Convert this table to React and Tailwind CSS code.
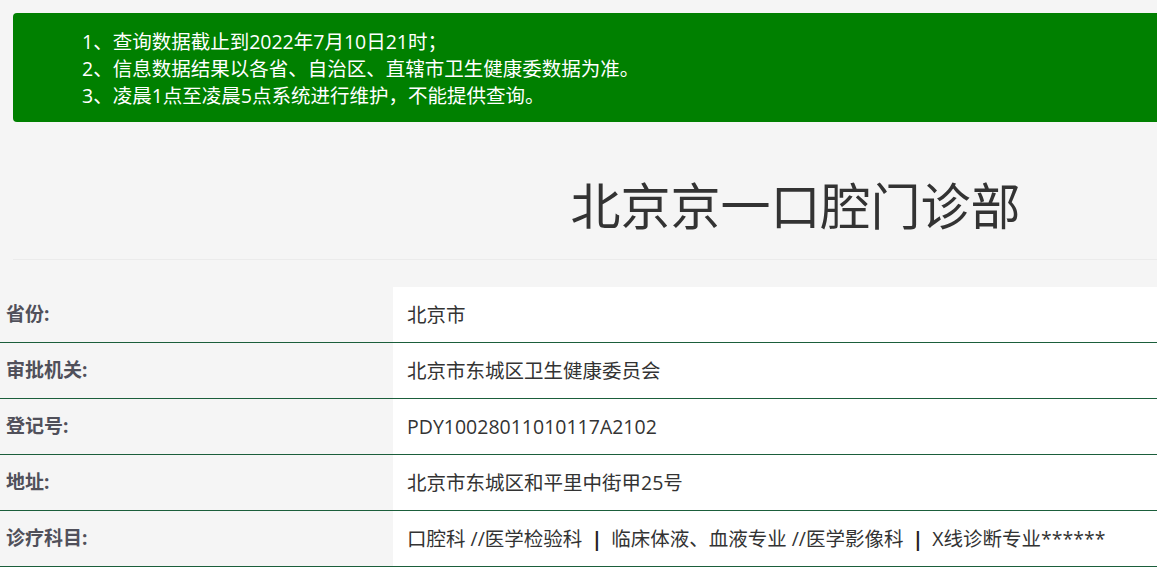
import React from 'react';

const Sep = () => <span className="font-bold text-[#222] px-[9px]">|</span>;

const rows = [
  { label: '省份:', value: '北京市' },
  { label: '审批机关:', value: '北京市东城区卫生健康委员会' },
  { label: '登记号:', value: 'PDY10028011010117A2102' },
  { label: '地址:', value: '北京市东城区和平里中街甲25号' },
  {
    label: '诊疗科目:',
    value: (
      <>
        口腔科 //医学检验科<Sep />临床体液、血液专业 //医学影像科<Sep />X线诊断专业******
      </>
    ),
  },
];

const font = { fontFamily: '"Open Sans", "Noto Sans CJK SC", sans-serif' };

export default function App() {
  return (
    <div className="w-screen min-h-screen overflow-hidden bg-white" style={font}>
      <div className="w-[1578px]">
        {/* notice + title */}
        <div className="bg-[#f5f5f5] pt-[13px] pb-[27px] pl-[13px]">
          <div className="bg-[#008000] rounded-[4px] pl-[69px] pt-[15px] pb-[13px] text-white text-[19.5px] leading-[27px]">
            <p>1、查询数据截止到2022年7月10日21时；</p>
            <p>2、信息数据结果以各省、自治区、直辖市卫生健康委数据为准。</p>
            <p>3、凌晨1点至凌晨5点系统进行维护，不能提供查询。</p>
          </div>
          <h1 className="mt-[57px] text-center text-[50px] leading-[55px] text-[#333]">北京京一口腔门诊部</h1>
          <div className="mt-[25px] h-px bg-[#ebebeb]" />
        </div>

        {/* detail table */}
        <div className="flex flex-col">
          {rows.map((r) => (
            <div key={r.label} className="flex h-[56px] border-b border-[#1b5e3b]">
              <div className="w-[393px] shrink-0 bg-[#f5f5f5] pl-[6px] flex items-center text-[19px] font-bold text-[#50505a]">
                {r.label}
              </div>
              <div className="flex-1 bg-white pl-[14px] flex items-center text-[19.5px] text-[#333]">
                <span>{r.value}</span>
              </div>
            </div>
          ))}
        </div>
      </div>
    </div>
  );
}
